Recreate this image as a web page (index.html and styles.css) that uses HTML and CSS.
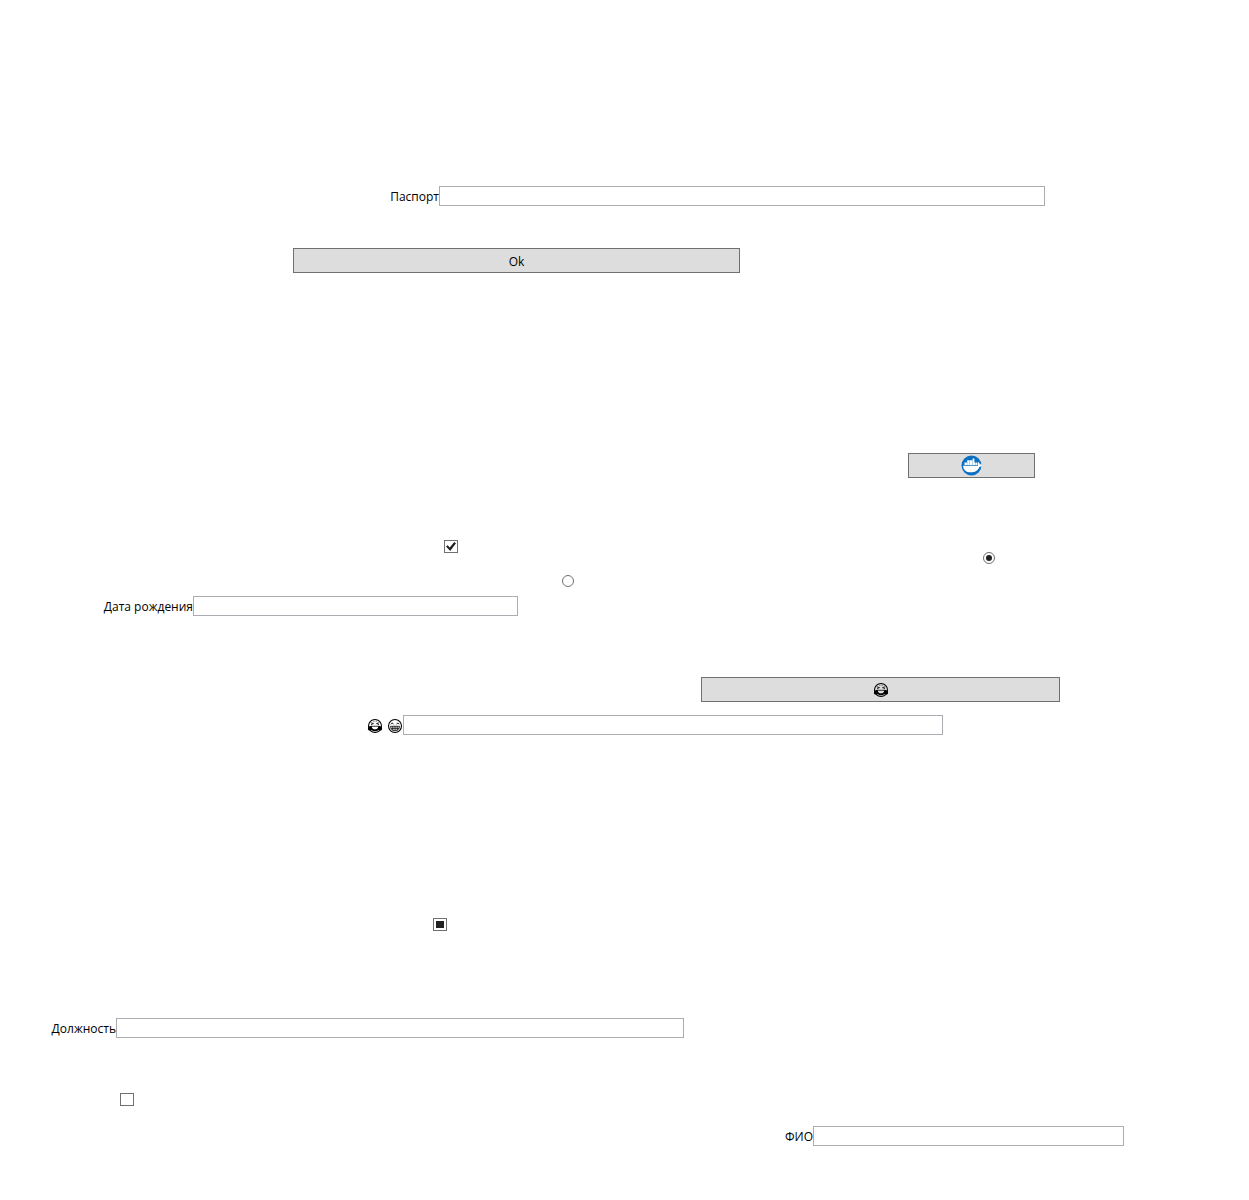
FILE: index.html
```
<!DOCTYPE html>
<html lang="ru">
<head>
<meta charset="utf-8">
<meta name="viewport" content="width=device-width, initial-scale=1">
<title>Анкета</title>
<link rel="stylesheet" href="styles.css">
</head>
<body>
<svg class="symbols" aria-hidden="true">
  <symbol id="laugh" viewBox="0 0 16 16">
    <circle cx="8" cy="8" r="6.500" fill="none" stroke="#000" stroke-width="1.100"/>
    <path d="M3.800 4.800l2.700.8-2.500 1M12.200 4.800l-2.700.8 2.500 1M6.500 3.300h.8M8.700 3.300h.8" fill="none" stroke="#000" stroke-width=".8"/>
    <path d="M4.300 8.300h7.400c0 2.500-1.500 3.900-3.700 3.900s-3.700-1.400-3.700-3.900z" fill="none" stroke="#000" stroke-width=".8"/>
    <path d="M4.600 7.800C2.300 8 .7 9.200.9 11c.2 1.800 2.700 2.100 3.700.900 1.500 1.900 5.300 1.900 6.800 0 1 1.200 3.500.9 3.700-.9.2-1.800-1.400-3-3.700-3.200.2 2.200-1.200 3.700-3.400 3.700S4.400 10 4.600 7.800z"/>
  </symbol>
  <symbol id="grin" viewBox="0 0 16 16">
    <circle cx="8" cy="8" r="6.500" fill="none" stroke="#000" stroke-width="1.100"/>
    <path d="M3.800 6.300c.6-1.500 2.200-1.500 2.800 0M9.400 6.300c.6-1.500 2.200-1.500 2.800 0" fill="none" stroke="#000" stroke-width=".9"/>
    <path d="M3.500 8.300h9c0 2.800-1.800 4.400-4.500 4.400s-4.500-1.600-4.500-4.400zM4 10.300h8M5.800 8.300v4M8 8.300v4.400M10.200 8.300v4" fill="none" stroke="#000" stroke-width=".8"/>
  </symbol>
</svg>
<form class="form">
  <div class="row passport">
    <label for="passport">Паспорт</label>
    <input class="text" id="passport" type="text">
  </div>
  <div class="row confirm">
    <button class="button caption" type="button">Ok</button>
  </div>
  <div class="row docker">
    <button class="button" type="button" aria-label="Docker">
      <svg class="logo" viewBox="0 0 22 22" aria-hidden="true">
        <circle cx="10.500" cy="10.500" r="10" fill="#0b6fc2"/>
        <path d="M2 10.800h15c-.7-1.300-.6-2.700.3-3.800 1 .6 1.500 1.400 1.600 2.400 1-.2 1.700 0 2.300.5-.5 1.100-1.400 1.800-2.700 1.800-1.600 4-4.600 5.600-8.800 5.600-4.400 0-7.200-1.900-7.700-6.500z" fill="#fff"/>
        <path d="M3.500 7.600h2.400v2.500H3.500zM6.200 7.600h2.400v2.500H6.200zM8.900 7.600h2.400v2.500H8.900zM11.600 7.600h2.400v2.500h-2.400zM14.300 7.600h1.700v2.500h-1.700zM6.200 5.200h2.400v2.200H6.200zM8.900 5.200h2.400v2.200H8.900zM11.600 3.600h1.800v3.800h-1.800z" fill="#fff"/>
      </svg>
    </button>
  </div>
  <div class="row choices">
    <input class="check" type="checkbox" aria-label="Флажок 1" checked>
    <input class="radio" type="radio" name="choice" aria-label="Вариант 1" checked>
  </div>
  <div class="row option">
    <input class="radio" type="radio" name="choice" aria-label="Вариант 2">
  </div>
  <div class="row birthday">
    <label for="birthday">Дата рождения</label>
    <input class="text" id="birthday" type="text">
  </div>
  <div class="row react">
    <button class="button" type="button" aria-label="Смех"><svg class="emoji" aria-hidden="true"><use href="#laugh"/></svg></button>
  </div>
  <div class="row mood">
    <label class="faces" for="mood" aria-label="Настроение"><svg class="emoji" aria-hidden="true"><use href="#laugh"/></svg><svg class="emoji" aria-hidden="true"><use href="#grin"/></svg></label>
    <input class="text" id="mood" type="text">
  </div>
  <div class="row partial">
    <input class="check" id="partial" type="checkbox" aria-label="Флажок 2">
  </div>
  <div class="row position">
    <label for="position">Должность</label>
    <input class="text" id="position" type="text">
  </div>
  <div class="row unchecked">
    <input class="check" type="checkbox" aria-label="Флажок 3">
  </div>
  <div class="row fullname">
    <label for="fullname">ФИО</label>
    <input class="text" id="fullname" type="text">
  </div>
</form>
<script>
document.getElementById("partial").indeterminate = true;
</script>
</body>
</html>
```
FILE: styles.css
```
* {
  box-sizing: border-box;
}

body {
  margin: 0;
  background: #fff;
  color: #000;
  font: 12px/16px "Open Sans", "Noto Sans", sans-serif;
}

.symbols {
  display: none;
}

.form {
  padding: 186px 0 54px;
}

/* Column shares scale with the window */
.row {
  display: grid;
  align-items: center;
}

.row label {
  justify-self: end;
  padding-top: 2px;
  white-space: nowrap;
}

.row .button,
.row .check,
.row .radio {
  grid-column: 2;
}

.passport {
  grid-template-columns: 439fr 606fr 204fr;
}

.confirm {
  grid-template-columns: 293fr 447fr 509fr;
  margin-top: 42px;
}

.docker {
  grid-template-columns: 908fr 127fr 214fr;
  margin-top: 180px;
}

.choices {
  grid-template-columns: 444fr 539fr 266fr;
  height: 24px;
  margin-top: 62px;
}

.choices .check {
  align-self: start;
}

.choices .radio {
  grid-column: 3;
  align-self: end;
}

.option {
  grid-template-columns: 562fr 687fr;
  margin-top: 11px;
}

.birthday {
  grid-template-columns: 193fr 325fr 731fr;
  margin-top: 9px;
}

.react {
  grid-template-columns: 701fr 359fr 189fr;
  margin-top: 61px;
}

.mood {
  grid-template-columns: 403fr 540fr 306fr;
  margin-top: 13px;
}

.partial {
  grid-template-columns: 433fr 816fr;
  margin-top: 183px;
}

.position {
  grid-template-columns: 116fr 568fr 565fr;
  margin-top: 87px;
}

.unchecked {
  grid-template-columns: 120fr 1129fr;
  margin-top: 55px;
}

.fullname {
  grid-template-columns: 813fr 311fr 125fr;
  margin-top: 20px;
}

.text {
  width: 100%;
  height: 20px;
  padding: 0 2px;
  border: 1px solid #abadb3;
  border-radius: 0;
  background: #fff;
  font: inherit;
}

.button {
  display: flex;
  align-items: center;
  justify-content: center;
  width: 100%;
  height: 25px;
  padding: 0;
  border: 1px solid #707070;
  border-radius: 0;
  background: #ddd;
  color: #000;
  font: inherit;
}

.caption {
  padding-top: 2px;
}

.logo {
  width: 22px;
  height: 22px;
}

.emoji {
  display: block;
  width: 16px;
  height: 16px;
}

.faces {
  display: flex;
  gap: 4px;
}

.check,
.radio {
  display: grid;
  place-items: center;
  appearance: none;
  margin: 0;
  border: 1px solid #707070;
  background: #fff;
}

.check {
  width: 14px;
  height: 13px;
}

.radio {
  width: 12px;
  height: 12px;
  border-radius: 50%;
}

.check:checked::before {
  content: "";
  width: 10px;
  height: 9px;
  background: #212121;
  clip-path: polygon(0 50%, 16% 36%, 38% 62%, 82% 0, 100% 14%, 42% 100%);
}

.check:indeterminate::before {
  content: "";
  width: 8px;
  height: 7px;
  background: #212121;
}

.radio:checked::before {
  content: "";
  width: 6px;
  height: 6px;
  border-radius: 50%;
  background: #212121;
}
```
